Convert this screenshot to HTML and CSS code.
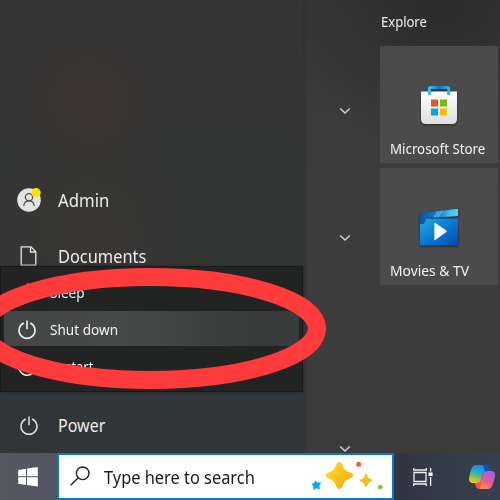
FILE: index.html
```html
<!DOCTYPE html>
<html lang="en">
<head>
<meta charset="utf-8">
<title>Start menu</title>
<link rel="stylesheet" href="styles.css">
</head>
<body>
<div class="screen">
  <main class="start">
    <nav class="places">
      <div class="place admin">
        <svg class="icon" width="24" height="24" viewBox="0 0 24 24"><circle cx="12" cy="12" r="11.8" fill="#e3e3e3"/><g fill="none" stroke="#4b4b4b" stroke-width="1.2"><circle cx="12" cy="9.2" r="3.6"/><path d="M6.8 18c.2-3.400 2.300-5.200 5.200-5.200s5 1.800 5.200 5.200"/></g><circle cx="19" cy="4.800" r="4.700" fill="#ffe300"/></svg>
        <span class="label w-admin">Admin</span>
      </div>
      <div class="place documents">
        <svg class="icon" width="24" height="24" viewBox="0 0 24 24"><path d="M4.200 2.900H14l4.800 4.800v13.500H4.200zM13.500 3v5h5" fill="none" stroke="#e6e6e6" stroke-width="1.300"/></svg>
        <span class="label w-documents">Documents</span>
      </div>
      <div class="place power">
        <svg class="icon" width="24" height="24" viewBox="0 0 24 24"><path d="M8.800 5A8 8 0 1 0 15.200 5M12 2.500v8.800" fill="none" stroke="#dedede" stroke-width="1.500"/></svg>
        <span class="label w-power">Power</span>
      </div>
      <div class="menu">
        <div class="option">
          <svg class="icon" width="24" height="24" viewBox="0 0 24 24"><path d="M12.500 2.500q-.5 8.500 7.500 11.500a8 8 0 0 1-14-2" fill="none" stroke="#f2f2f2" stroke-width="1.500"/></svg>
          <span class="label">Sleep</span>
        </div>
        <div class="option selected">
          <svg class="icon" width="24" height="24" viewBox="0 0 24 24"><path d="M8.800 5A8 8 0 1 0 15.200 5M12 2.500v8.800" fill="none" stroke="#f0f0f0" stroke-width="1.600"/></svg>
          <span class="label">Shut down</span>
        </div>
        <div class="option">
          <svg class="icon" width="24" height="24" viewBox="0 0 24 24"><path d="M8.500 5A8 8 0 1 0 17 6M17 2v5h-5" fill="none" stroke="#f0f0f0" stroke-width="1.500"/></svg>
          <span class="label w-restart">Restart</span>
        </div>
      </div>
    </nav>
    <div class="apps">
      <svg class="chevron c1" width="12" height="8" viewBox="0 0 12 8"><path d="M1.200 1.500 6 6l4.800-4.500"/></svg>
      <svg class="chevron c2" width="12" height="8" viewBox="0 0 12 8"><path d="M1.200 1.500 6 6l4.800-4.500"/></svg>
      <svg class="chevron c3" width="12" height="8" viewBox="0 0 12 8"><path d="M1.200 1.500 6 6l4.800-4.500"/></svg>
    </div>
    <section class="tiles">
      <h2><span class="label w-explore">Explore</span></h2>
      <div class="tile">
        <svg class="art" width="46" height="46" viewBox="0 0 46 46">
          <defs><linearGradient id="bag" x2="0" y2="1"><stop stop-color="#fff"/><stop offset="1" stop-color="#dedede"/></linearGradient><linearGradient id="handle" x2="1" y2="0"><stop stop-color="#35c4f4"/><stop offset=".5" stop-color="#087bd2"/><stop offset="1" stop-color="#27b8ee"/></linearGradient></defs>
          <path d="M5 9.500h36V37q0 5-5 5H10q-5 0-5-5z" fill="url(#bag)"/>
          <path d="M13.300 13V7q0-1.500 1.500-1.500h16.400q1.500 0 1.500 1.500v6" fill="none" stroke="url(#handle)" stroke-width="3"/>
          <path d="M15 17.500h7v7h-7z" fill="#f25022"/><path d="M24 17.500h7v7h-7z" fill="#7fba00"/><path d="M15 26.500h7v7h-7z" fill="#00a4ef"/><path d="M24 26.500h7v7h-7z" fill="#ffb900"/>
        </svg>
        <span class="label w-store">Microsoft Store</span>
      </div>
      <div class="tile">
        <svg class="art" width="46" height="46" viewBox="0 0 46 46">
          <defs><linearGradient id="film" x2="1" y2="1"><stop stop-color="#29a8e4"/><stop offset=".5" stop-color="#087bd0"/><stop offset="1" stop-color="#0748b4"/></linearGradient><linearGradient id="clap" x2="1" y2="0"><stop stop-color="#07569d"/><stop offset=".5" stop-color="#1684d2"/><stop offset="1" stop-color="#5be0fa"/></linearGradient></defs>
          <path d="M4 14h38v27.500H4z" fill="url(#film)"/>
          <path d="M4 9 41 5q1 0 1 1v6L11 14 8 20H4z" fill="url(#clap)"/>
          <path d="m21 7.200 6-.7-4 6.700-6 .4zM34 5.800l8-.8v7l-12 .8z" fill="#40caf4" opacity=".6"/>
          <path d="M11 14.300h31" stroke="#12548c" stroke-width="1"/>
          <path d="M18.300 19.500v16q0 1 1 .5l11-8q1-.8 0-1.500l-11-7.500q-1-.5-1 .5z" fill="#f4f4f4"/>
        </svg>
        <span class="label w-movies">Movies &amp; TV</span>
      </div>
    </section>
  </main>
  <footer class="taskbar">
    <div class="start-button"><svg width="20" height="20" viewBox="0 0 20 20"><path d="M.2 2.900 8 1.800v7.500H.2zM9 1.600 19.800.1v9.200H9zM.2 10.300H8v7.600L.2 16.800zM9 10.300h10.800v9.300L9 18.100z" fill="#fff"/></svg></div>
    <div class="search">
      <svg class="glass" width="20" height="20" viewBox="0 0 20 20"><circle cx="12.700" cy="7.300" r="6.300"/><path d="m8.300 11.800-7.600 7.500"/></svg>
      <span class="label w-search">Type here to search</span>
      <svg class="sparkles" width="74" height="32" viewBox="0 0 74 32">
        <defs><linearGradient id="gold" x2="1" y2="1"><stop stop-color="#ffdc3b"/><stop offset=".5" stop-color="#fcc419"/><stop offset="1" stop-color="#eda51c"/></linearGradient></defs>
        <path d="M28.300 2c1.200 0 2.400.8 3 2.500 2 5 3.500 6.500 8.500 8.500 3 1.200 3 3.800 0 5-5 2-6.500 3.500-8.500 8.500-1.200 3.300-4.800 3.300-6 0-2-5-3.500-6.500-8.500-8.500-3-1.200-3-3.800 0-5 5-2 6.500-3.500 8.500-8.500.6-1.700 1.800-2.500 3-2.500z" fill="url(#gold)"/>
        <path d="M55 14c.8 0 1 .5 1.500 2 .8 2 1.300 2.500 3.500 3.300 1.600.7 1.600 1.700 0 2.400-2.200.8-2.700 1.300-3.500 3.500-.8 2-2.200 2-3 0-.8-2.200-1.300-2.700-3.500-3.500-1.600-.7-1.600-1.700 0-2.400 2.200-.8 2.700-1.300 3.500-3.300.5-1.500.7-2 1.500-2z" fill="#f9bd2c"/>
        <path d="m4.300 20.800 2 2 3.500.2-1.800 2.700.6 3.400-2.900-1-3.100 1.500V26L.8 24l2.700-.7z" fill="#08a9e8" stroke="#08a9e8" stroke-width=".6" stroke-linejoin="round"/>
        <circle cx="47.600" cy="4.200" r="2.500" fill="#f26522"/><circle cx="69.200" cy="27.200" r="2.400" fill="#8cc63f"/>
      </svg>
    </div>
    <div class="tray">
      <svg width="20" height="20" viewBox="0 0 20 20" fill="none" stroke="#f1f1f1" stroke-width="1.300"><path d="M1 5.500h12v9H1zM.7 1v2h12.600V1M.7 19v-2h12.600v2M17.600 1v3.500M17.600 10v9"/><path d="M15.600 5.500h4v3.500h-4z" fill="#fff" stroke="none"/></svg>
      <svg width="28" height="28" viewBox="0 0 28 28">
        <defs><linearGradient id="cool" x1=".6" y1="0" x2=".2" y2="1"><stop stop-color="#1684e4"/><stop offset=".35" stop-color="#19a9d8"/><stop offset=".65" stop-color="#72bd68"/><stop offset="1" stop-color="#ffd000"/></linearGradient><linearGradient id="warm" x1=".8" y1="0" x2=".2" y2="1"><stop stop-color="#9c62ed"/><stop offset=".5" stop-color="#ed5594"/><stop offset="1" stop-color="#ff9b55"/></linearGradient></defs>
        <path d="M8 2h9q3 0 4 3l1 3h-4q-2 0-3 3l-2 6q-1 3-4 3H5q-4 0-4-4 0-2 2-9 2-5 5-5z" fill="url(#cool)"/>
        <path d="M15 2h2q3 0 4 3l1 3h-3q-3 0-3-3z" fill="#174bbd"/>
        <path d="M20 8h3q4 0 4 4 0 2-2 9-2 5-5 5h-8q-3 0-4-3l-1-3h2q3 0 4-3l2-6q1-3 5-3z" fill="url(#warm)"/>
        <path d="M7 20h2q3 0 4-3 1 2-.5 7-.5 2 .5 2h-1q-3 0-4-3z" fill="#f05b3d"/>
      </svg>
    </div>
  </footer>
  <svg class="highlight" width="500" height="500" viewBox="0 0 500 500"><ellipse cx="150" cy="328.500" rx="167" ry="51.500"/></svg>
</div>
</body>
</html>
```
FILE: styles.css
```css
* { box-sizing: border-box; }
body { margin: 0; overflow: hidden; font-family: "Noto Sans", sans-serif; color: #ededed; }
svg { display: block; flex-shrink: 0; }
.screen { position: relative; width: 500px; height: 500px; overflow: hidden; display: grid; grid-template-rows: 453px 47px; }
.start { overflow: hidden; display: grid; grid-template-columns: 303px 77px 120px; background: radial-gradient(ellipse at 440px 0, #2d2c2c 0, transparent 150px), linear-gradient(180deg, #363636 0, #3b3b3b 25%, #3d3d3d 60%, #3b3b3b 100%); }
.label { display: inline-block; white-space: nowrap; transform-origin: left center; }
.places { position: relative; display: flex; flex-direction: column; padding-top: 180px; background: radial-gradient(circle at 90px 100px, #3d3633 0, transparent 75px), radial-gradient(ellipse at 90px 235px, #393733, transparent 90px), linear-gradient(180deg, #343434 0, #343636 60%, #30363a 86%, #303536 100%); box-shadow: 1px 0 5px #2c2f30; }
.place { display: flex; align-items: center; height: 40px; padding-left: 17px; gap: 16.5px; font-size: 18px; line-height: 24px; }
.documents { margin-top: 16px; }
.power { margin-top: 130px; }
.w-admin { transform: scaleX(.93); }
.w-documents { transform: scaleX(.91); }
.w-power { transform: translateY(-1px) scaleX(.89); }
.menu { position: absolute; left: 0; top: 266px; width: 303px; height: 126px; border: 1px solid #181919; padding: 7px 3px 0; background: #222323; display: flex; flex-direction: column; gap: 2px; box-shadow: 0 0 3px #242728; }
.option { height: 35px; display: flex; align-items: center; gap: 11px; padding: 2px 0 0 11px; font-size: 14px; line-height: 20px; color: #f2f2f2; }
.option .label { transform: scaleX(.97); }
.option .w-restart { transform: scaleX(.92); }
.selected { background: linear-gradient(90deg, #444646, #484a4a 40%, #393b3b 85%); }
.apps { display: flex; flex-direction: column; padding-left: 36px; }
.chevron { fill: none; stroke: #cfcfcf; stroke-width: 1.5; }
.c1 { margin-top: 107px; }
.c2 { margin-top: 119px; }
.c3 { margin-top: 203px; }
.tiles { display: flex; flex-direction: column; gap: 5px; }
h2 { margin: 0; height: 41px; padding: 12px 0 0 .5px; font-size: 14px; line-height: 20px; font-weight: 400; }
.tile { width: 118px; height: 117px; background: #4b4b4b; display: flex; flex-direction: column; justify-content: flex-end; padding: 0 0 4px 10px; font-size: 14px; line-height: 20px; color: #f3f3f3; }
.art { margin: 0 0 11px 26px; filter: drop-shadow(0 1px 1px #252525); }
.w-explore { transform: scaleX(.93); }
.w-store { transform: scaleX(.95); }
.w-movies { transform: scaleX(.99); }
.taskbar { position: relative; display: grid; grid-template-columns: 57px 337px 106px; background: #303747; }
.start-button { display: flex; align-items: center; padding-left: 18px; background: linear-gradient(90deg, #555963, #505561); }
.search { display: flex; align-items: center; border: 2px solid #0878d6; background: #fff; padding-left: 11px; color: #191919; font-size: 18px; }
.glass { fill: none; stroke: #252525; stroke-width: 1.4; margin-top: -2px; }
.w-search { width: 207px; margin-left: 14px; transform: scaleX(.91); }
.sparkles { margin-top: -1px; }
.tray { display: flex; align-items: center; padding-left: 19px; gap: 35px; background: linear-gradient(90deg, #303543, #374051); }
.highlight { position: absolute; inset: 0; pointer-events: none; fill: none; stroke: #ff3b3b; stroke-width: 18; }
```
